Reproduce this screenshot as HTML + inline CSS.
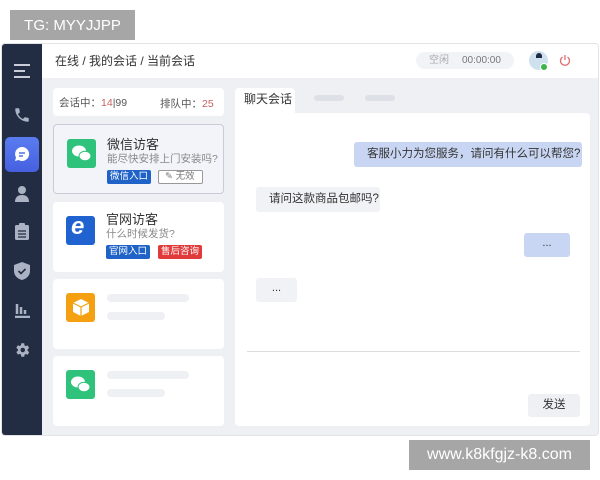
<!DOCTYPE html>
<html><head><meta charset="utf-8"><style>
*{margin:0;padding:0;box-sizing:border-box}
body{width:600px;height:480px;background:#fff;position:relative;overflow:hidden;font-family:"Liberation Sans","Noto Sans CJK SC",sans-serif;color:#333}
.a{position:absolute;white-space:nowrap}
.wm{background:#a6a6a6;color:#fff;font-size:15px;display:flex;align-items:center;justify-content:center}
.frame{left:1px;top:43px;width:598px;height:393px;background:#eef0f4;border-radius:4px;overflow:hidden;border:1px solid #e2e4e8}
.side{left:0;top:0;width:40px;height:393px;background:#222c42}
.hdr{left:40px;top:0;width:558px;height:34px;background:#fff}
.card{background:#fff;border-radius:4px}
.ic{width:29px;height:29px;border-radius:3px}
.tag{font-size:9.5px;color:#fff;padding:0 3px;height:14px;line-height:14px;border-radius:2px}
.sk{background:#eef0f3;border-radius:4px;height:8px}
</style></head><body>
<div class="a wm" style="left:10px;top:10px;width:125px;height:30px">TG: MYYJJPP</div>
<div class="a frame">
 <div class="a side">
  <svg class="a" style="left:11px;top:18px" width="18" height="18"><path d="M1 3h16M1 9h11M1 15h16" stroke="#c8cdd8" stroke-width="2"/></svg>
  <svg class="a" style="left:11px;top:62px" width="18" height="18" viewBox="0 0 24 24"><path d="M6.6 10.8a15 15 0 006.6 6.6l2.2-2.2c.3-.3.7-.4 1-.2 1.1.4 2.3.6 3.6.6.6 0 1 .4 1 1V20c0 .6-.4 1-1 1A17 17 0 013 4c0-.6.4-1 1-1h3.5c.6 0 1 .4 1 1 0 1.3.2 2.5.6 3.6.1.3 0 .7-.2 1z" fill="#aab2c4"/></svg>
  <div class="a" style="left:3px;top:93px;width:34px;height:35px;border-radius:5px;background:linear-gradient(#5a7cf0,#4660e0)"></div>
  <svg class="a" style="left:11px;top:101px" width="18" height="18" viewBox="0 0 18 18"><path d="M9 2a7 7 0 00-6 10.5L2 16l3.5-1A7 7 0 109 2z" fill="#fff"/><path d="M6 8h6M6 11h4" stroke="#5070e8" stroke-width="1.4"/></svg>
  <svg class="a" style="left:12px;top:141px" width="16" height="17"><circle cx="8" cy="5" r="4" fill="#aab2c4"/><path d="M1 17c0-5 3-7 7-7s7 2 7 7z" fill="#aab2c4"/></svg>
  <svg class="a" style="left:13px;top:179px" width="14" height="17"><rect x="0" y="2" width="14" height="15" rx="1.5" fill="#aab2c4"/><rect x="4" y="0" width="6" height="4" rx="1" fill="#aab2c4"/><path d="M3 8h8M3 11h8M3 14h8" stroke="#222c42" stroke-width="1.3"/></svg>
  <svg class="a" style="left:12px;top:218px" width="16" height="18"><path d="M8 0l8 3v6c0 5-4 8-8 9-4-1-8-4-8-9V3z" fill="#aab2c4"/><path d="M4.5 9l2.5 2.5 4.5-4.5" stroke="#222c42" stroke-width="1.6" fill="none"/></svg>
  <svg class="a" style="left:12px;top:258px" width="16" height="16"><path d="M3 2v10M7 5v7M11 8v4M1 15h15" stroke="#aab2c4" stroke-width="2.5"/></svg>
  <svg class="a" style="left:11px;top:297px" width="18" height="18" viewBox="0 0 24 24"><path d="M19.4 13a7.5 7.5 0 000-2l2.1-1.6-2-3.5-2.5 1a7 7 0 00-1.7-1L15 3h-4l-.4 2.6a7 7 0 00-1.7 1l-2.5-1-2 3.5L6.6 11a7.5 7.5 0 000 2l-2.1 1.6 2 3.5 2.5-1a7 7 0 001.7 1L11 21h4l.4-2.6a7 7 0 001.7-1l2.5 1 2-3.5z" fill="#aab2c4"/><circle cx="13" cy="12" r="3" fill="#222c42"/></svg>
 </div>
 <div class="a hdr">
  <div class="a" style="left:13px;top:8px;font-size:12px;color:#333">在线 / 我的会话 / 当前会话</div>
  <div class="a" style="left:374px;top:8px;width:98px;height:17px;border-radius:9px;background:#f2f3f6;font-size:10px;color:#888;line-height:17px"><span style="margin-left:13px;color:#aaa">空闲</span><span style="margin-left:13px;color:#777">00:00:00</span></div>
  <div class="a" style="left:487px;top:7px;width:19px;height:19px;border-radius:50%;background:#cfe0ee"></div>
  <div class="a" style="left:494px;top:9px;width:6px;height:5px;border-radius:3px 3px 0 0;background:#1e2a44"></div>
  <div class="a" style="left:498px;top:19px;width:8px;height:8px;border-radius:50%;background:#3bb54a;border:1px solid #fff"></div>
  <svg class="a" style="left:517px;top:10px" width="12" height="12"><path d="M3.5 3a4.5 4.5 0 105 0" stroke="#e07070" stroke-width="1.3" fill="none"/><path d="M6 1v5" stroke="#e07070" stroke-width="1.3"/></svg>
 </div>
 <div class="a card" style="left:51px;top:44px;width:171px;height:28px;font-size:10.5px;color:#555">
  <span class="a" style="left:6px;top:7px">会话中：<span style="color:#c86060">14</span>|99</span>
  <span class="a" style="left:107px;top:8px">排队中：<span style="color:#c86060">25</span></span>
 </div>
 <div class="a card" style="left:51px;top:80px;width:171px;height:70px;background:#f2f4fa;border:1px solid #c8ccd8">
  <div class="a ic" style="left:13px;top:14px;background:#2fc27a"></div>
  <svg class="a" style="left:17px;top:19px" width="22" height="19"><ellipse cx="8" cy="7" rx="7" ry="5.5" fill="#fff"/><ellipse cx="14" cy="12" rx="6" ry="4.8" fill="#fff" stroke="#2fc27a"/></svg>
  <div class="a" style="left:53px;top:9px;font-size:13px;color:#333">微信访客</div>
  <div class="a" style="left:53px;top:26px;font-size:10.5px;color:#888">能尽快安排上门安装吗?</div>
  <div class="a tag" style="left:53px;top:45px;background:#1f62c8">微信入口</div>
  <div class="a tag" style="left:104px;top:45px;background:#fff;color:#777;border:1px solid #999;width:45px;line-height:12px;padding-left:6px">✎ 无效</div>
 </div>
 <div class="a card" style="left:51px;top:158px;width:171px;height:70px">
  <div class="a ic" style="left:13px;top:14px;background:#1f62d0"></div>
  <div class="a" style="left:18px;top:12px;font-size:24px;font-style:italic;color:#fff;font-weight:bold;line-height:26px">e</div>
  <div class="a" style="left:53px;top:7px;font-size:13px;color:#333">官网访客</div>
  <div class="a" style="left:53px;top:24px;font-size:10.5px;color:#888">什么时候发货?</div>
  <div class="a tag" style="left:53px;top:43px;background:#1f62c8">官网入口</div>
  <div class="a tag" style="left:105px;top:43px;background:#e03a3a">售后咨询</div>
 </div>
 <div class="a card" style="left:51px;top:235px;width:171px;height:70px">
  <div class="a ic" style="left:13px;top:14px;background:#f5a010"></div>
  <svg class="a" style="left:20px;top:20px" width="16" height="17"><path d="M8 0l8 4v9l-8 4-8-4V4z" fill="#fff"/><path d="M0 4l8 4 8-4M8 8v9" stroke="#f5a010" stroke-width="1.2" fill="none"/></svg>
  <div class="a sk" style="left:54px;top:15px;width:82px"></div>
  <div class="a sk" style="left:54px;top:33px;width:58px"></div>
 </div>
 <div class="a card" style="left:51px;top:312px;width:171px;height:70px">
  <div class="a ic" style="left:13px;top:14px;background:#2fc27a"></div>
  <svg class="a" style="left:17px;top:19px" width="22" height="19"><ellipse cx="8" cy="7" rx="7" ry="5.5" fill="#fff"/><ellipse cx="14" cy="12" rx="6" ry="4.8" fill="#fff" stroke="#2fc27a"/></svg>
  <div class="a sk" style="left:54px;top:15px;width:82px"></div>
  <div class="a sk" style="left:54px;top:33px;width:58px"></div>
 </div>
 <div class="a" style="left:233px;top:44px;width:60px;height:26px;background:#fff;border-radius:4px 4px 0 0;font-size:12px;line-height:22px;padding-left:9px">聊天会话</div>
 <div class="a sk" style="left:312px;top:51px;width:30px;height:6px;background:#dde0e6"></div>
 <div class="a sk" style="left:363px;top:51px;width:30px;height:6px;background:#dde0e6"></div>
 <div class="a" style="left:233px;top:69px;width:355px;height:313px;background:#fff;border-radius:0 4px 4px 4px">
  <div class="a" style="left:119px;top:29px;width:228px;height:25px;background:#c9d6f3;border-radius:3px;font-size:11.5px;line-height:25px;padding-left:13px">客服小力为您服务，请问有什么可以帮您?</div>
  <div class="a" style="left:21px;top:74px;width:124px;height:25px;background:#f1f2f5;border-radius:3px;font-size:11.5px;line-height:25px;padding-left:13px">请问这款商品包邮吗?</div>
  <div class="a" style="left:289px;top:120px;width:46px;height:24px;background:#c9d6f3;border-radius:3px;font-size:11px;line-height:20px;text-align:center">...</div>
  <div class="a" style="left:21px;top:165px;width:41px;height:24px;background:#f1f2f5;border-radius:3px;font-size:11px;line-height:20px;text-align:center">...</div>
  <div class="a" style="left:12px;top:238px;width:333px;height:1px;background:#ddd"></div>
  <div class="a" style="left:293px;top:281px;width:52px;height:23px;background:#eef0f3;border-radius:3px;font-size:11.5px;line-height:23px;text-align:center">发送</div>
 </div>
</div>
<div class="a wm" style="left:409px;top:440px;width:181px;height:30px;font-size:16px">www.k8kfgjz-k8.com</div>
</body></html>
